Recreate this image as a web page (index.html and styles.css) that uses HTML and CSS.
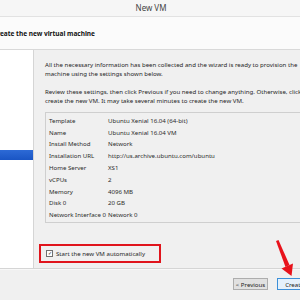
FILE: index.html
```html
<!DOCTYPE html>
<html lang="en">
<head>
    <meta charset="UTF-8">
    <title>New VM</title>
    <link rel="stylesheet" href="styles.css">
</head>
<body>
    <div class="window">
        <div class="titlebar">New VM</div>

        <div class="header">
            <h2>Create the new virtual machine</h2>
        </div>

        <div class="main">
            <div class="nav">
                <div class="nav-item selected"></div>
            </div>

            <div class="content">
                <p>All the necessary information has been collected and the wizard is ready to provision the<br>
                machine using the settings shown below.</p>

                <p>Review these settings, then click Previous if you need to change anything. Otherwise, click<br>
                create the new VM. It may take several minutes to create the new VM.</p>

                <div class="summary">
                    <div class="row"><span class="key">Template</span><span>Ubuntu Xenial 16.04 (64-bit)</span></div>
                    <div class="row"><span class="key">Name</span><span>Ubuntu Xenial 16.04 VM</span></div>
                    <div class="row"><span class="key">Install Method</span><span>Network</span></div>
                    <div class="row"><span class="key">Installation URL</span><span>http://us.archive.ubuntu.com/ubuntu</span></div>
                    <div class="row"><span class="key">Home Server</span><span>XS1</span></div>
                    <div class="row"><span class="key">vCPUs</span><span>2</span></div>
                    <div class="row"><span class="key">Memory</span><span>4096 MB</span></div>
                    <div class="row"><span class="key">Disk 0</span><span>20 GB</span></div>
                    <div class="row"><span class="key">Network Interface 0</span><span>Network 0</span></div>
                </div>

                <label class="start-vm">
                    <span class="checkbox">&#10003;</span>
                    Start the new VM automatically
                </label>
            </div>
        </div>

        <div class="footer">
            <button>&lt; Previous</button>
            <button class="primary">Create</button>
        </div>
    </div>

    <!-- annotation arrow -->
    <svg class="arrow" width="300" height="300" viewBox="0 0 300 300">
        <polygon points="276,241 278.5,240 289.5,265 285.5,267" fill="#e8121b"/>
        <polygon points="281.5,268.5 293,263.5 291.5,276" fill="#e8121b"/>
    </svg>
</body>
</html>
```

FILE: styles.css
```css
body {
    margin: 0;
    width: 300px;
    height: 300px;
    overflow: hidden;
    font-family: "Noto Sans", "Open Sans", sans-serif;
    font-size: 6.1px;
    color: #1e1e1e;
    position: relative;
}

.window {
    display: flex;
    flex-direction: column;
    height: 300px;
    background-color: #f0f0f0;
}

.titlebar {
    height: 16px;
    line-height: 16px;
    padding-left: 2px;
    text-align: center;
    font-size: 8px;
    color: #444;
    background-color: #f6f6f6;
    border-bottom: 1px solid #e2e2e2;
}

.header {
    height: 32px;
    display: flex;
    align-items: center;
    background-color: #fbfbfb;
    border-bottom: 1px solid #d9d9d9;
}

.header h2 {
    margin: 0 0 0 -7px;
    font-size: 6.5px;
    font-weight: bold;
    color: #111;
}

.main {
    display: flex;
    height: 218px;
    overflow: hidden;
    border-bottom: 1px solid #d5d5d5;
}

.nav {
    width: 33px;
    flex-shrink: 0;
    padding-top: 100px;
    background-color: white;
    border-right: 1px solid #d5d5d5;
}

.nav-item {
    height: 10px;
}

.nav-item.selected {
    background: linear-gradient(#2d6ad6, #1a55c4);
}

.content {
    flex: 1;
    padding: 10px 0 0 11px;
    white-space: nowrap;
}

.content p {
    margin: 0 0 9px;
    line-height: 9px;
}

.summary {
    width: 300px;
    margin-top: -2.5px;
    padding: 2px 0 1px;
    border: 1px solid #cfcfcf;
    border-right: none;
    color: #2a2a2a;
}

.row {
    display: flex;
    height: 11.8px;
    align-items: center;
    padding-left: 3px;
}

.key {
    width: 59px;
}

.start-vm {
    display: flex;
    align-items: center;
    gap: 3px;
    width: 113px;
    height: 15px;
    margin: 21px 0 0 -6px;
    padding-left: 5px;
    border: 2px solid #e0141c;
}

.checkbox {
    width: 5px;
    height: 5px;
    border: 1px solid #707070;
    background-color: white;
    font-size: 5px;
    line-height: 5px;
    text-align: center;
    color: #222;
}

.footer {
    flex: 1;
    display: flex;
    gap: 9px;
    padding: 8px 0 0 233px;
    border-top: 1px solid #f8f8f8;
}

button {
    flex-shrink: 0;
    width: 35px;
    height: 12px;
    padding: 0;
    font-family: "Noto Sans", "Open Sans", sans-serif;
    font-size: 6.1px;
    color: #222;
    background-color: #e1e1e1;
    border: 1px solid #adadad;
}

button.primary {
    background-color: #e5f1fb;
    border-color: #3c8fd8;
}

.arrow {
    position: absolute;
    top: 0;
    left: 0;
}
```
